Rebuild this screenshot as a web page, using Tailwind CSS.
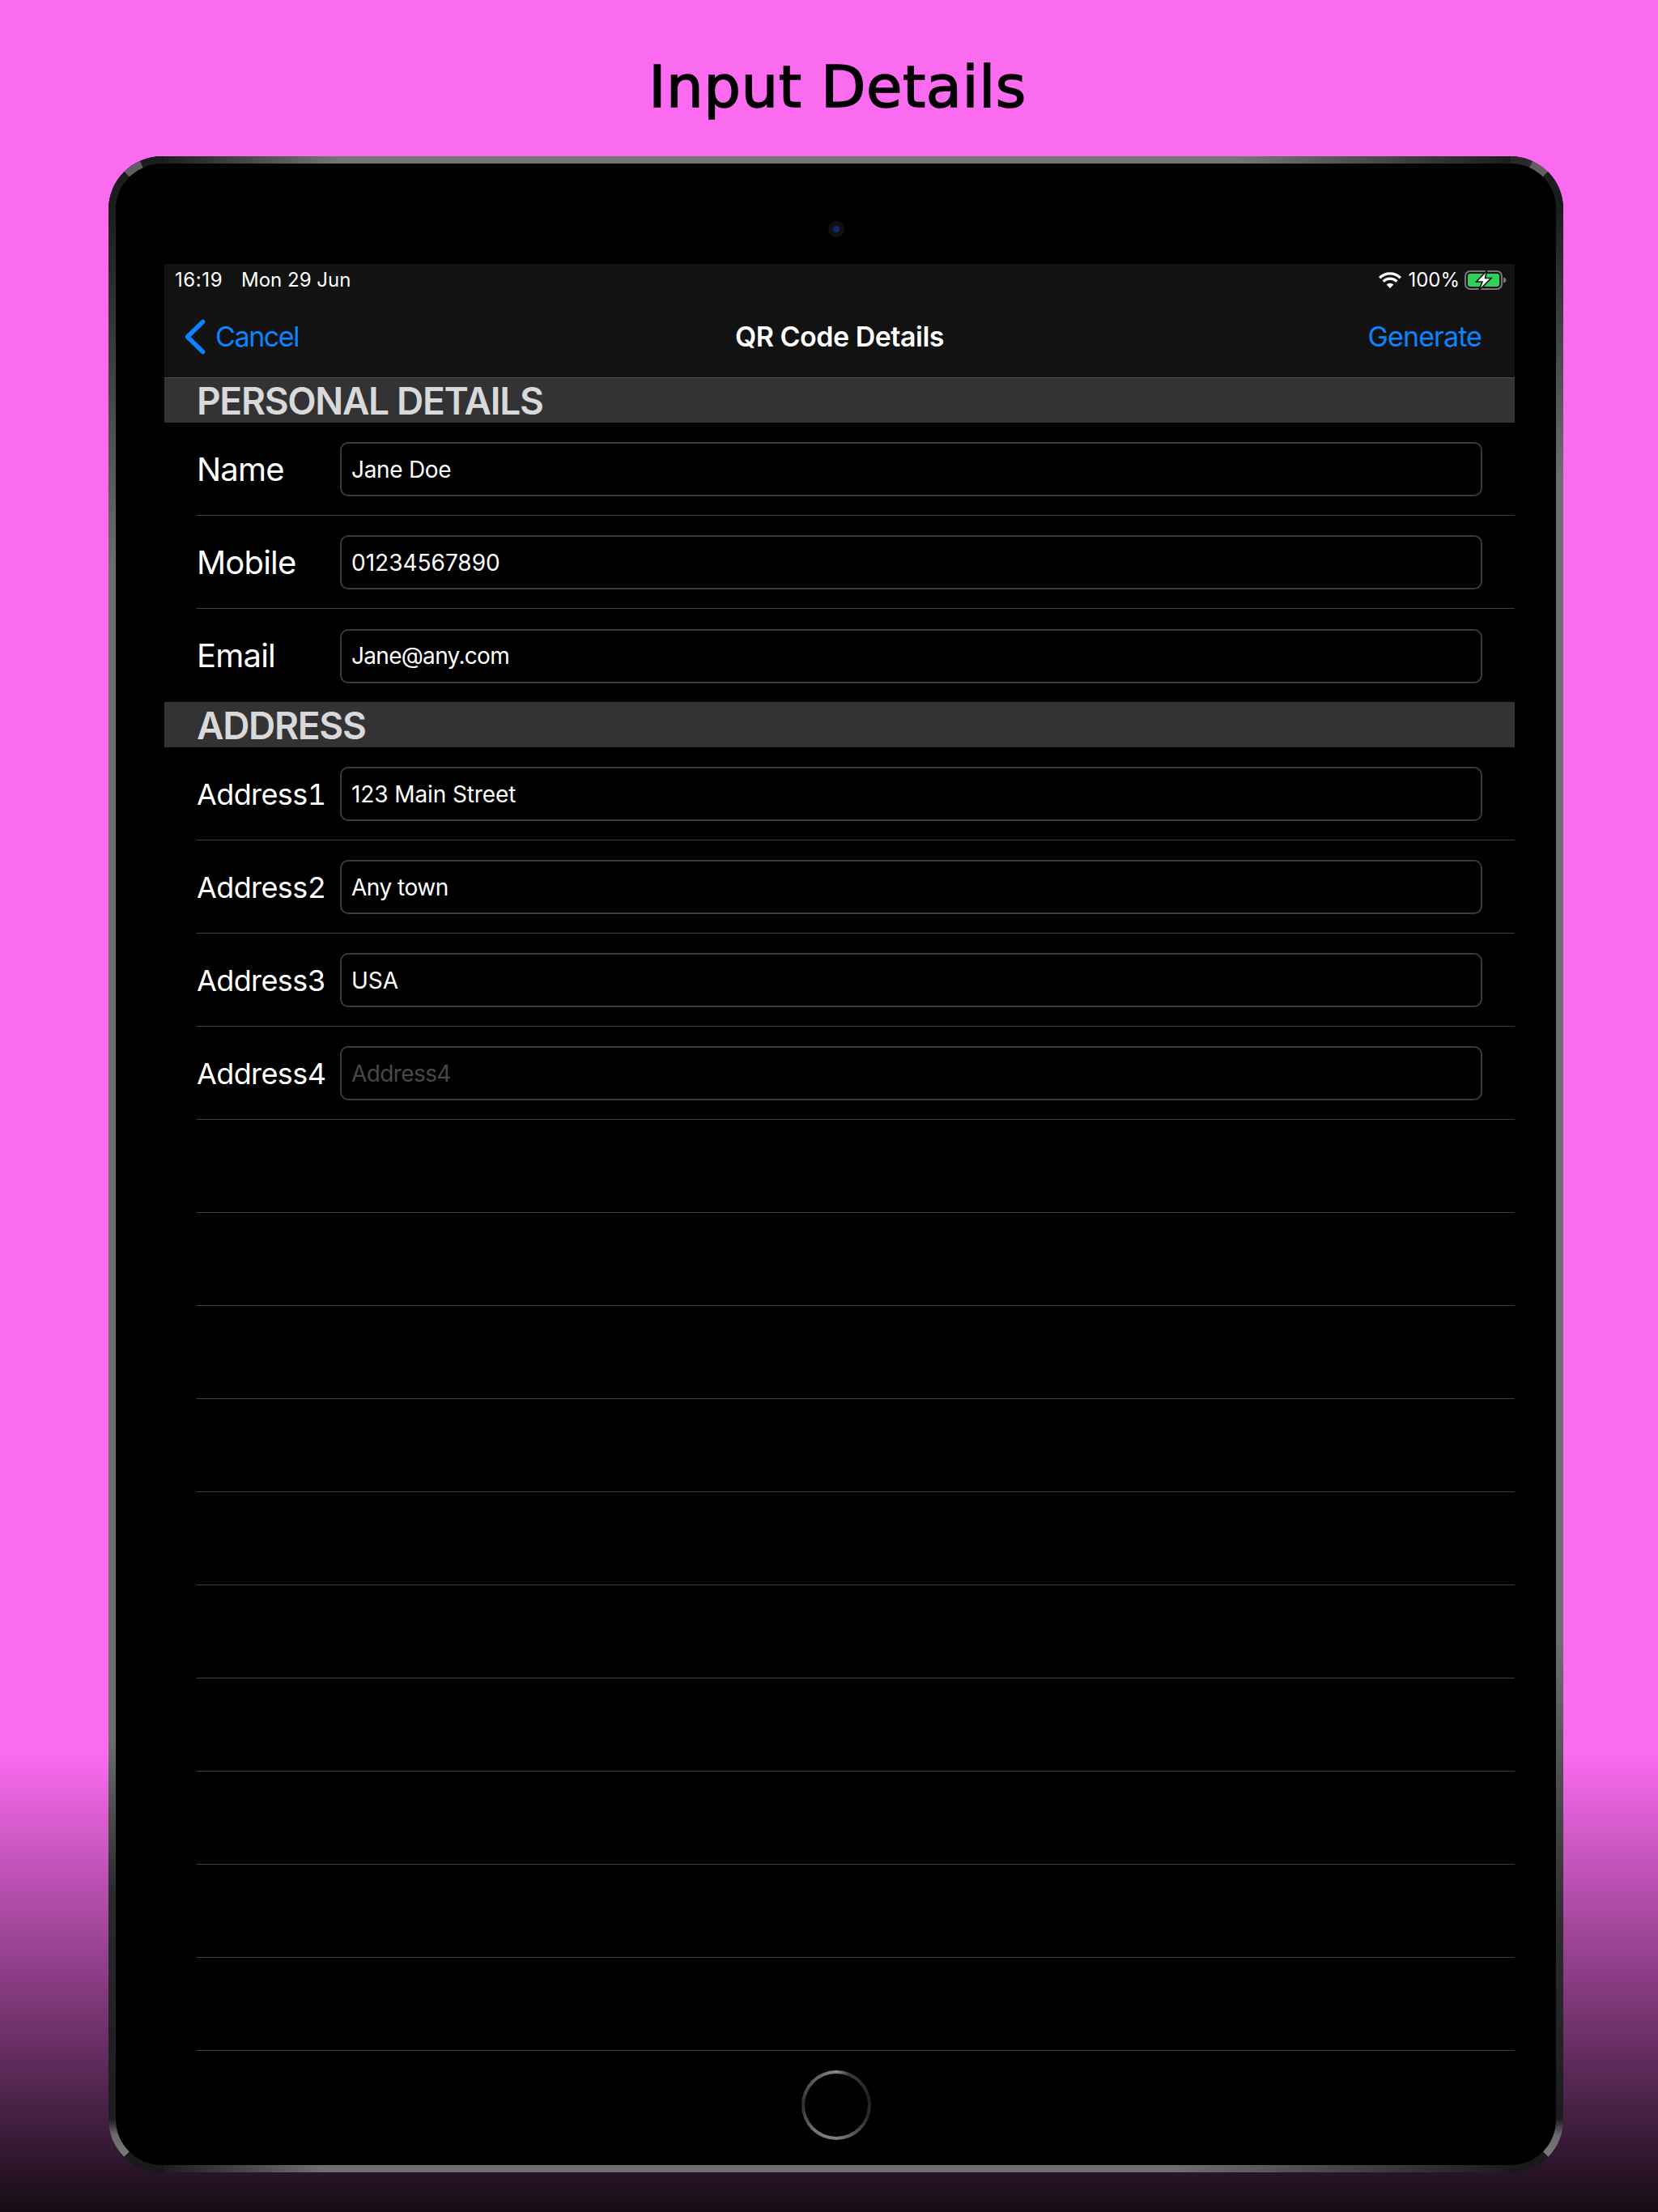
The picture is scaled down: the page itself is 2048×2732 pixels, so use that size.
<!DOCTYPE html>
<html>
<head>
<meta charset="utf-8">
<script src="https://cdn.jsdelivr.net/npm/@tailwindcss/browser@4"></script>
<title>Input Details</title>
</head>
<body class="m-0">
<div class="w-[2048px] h-[2732px] overflow-hidden flex flex-col font-[Inter,sans-serif] bg-[linear-gradient(180deg,#fb6bf0_0,#fb6bf0_2163px,#150c14_2732px)]">
  <div class="h-[193px] shrink-0 flex items-center justify-center pl-[21px] pt-[21px]">
    <h1 class="text-[72px] leading-none font-normal text-black tracking-[0.6px] [-webkit-text-stroke:1.6px_black] font-['DejaVu_Sans',sans-serif]">Input Details</h1>
  </div>
  <div class="relative ml-[134px] w-[1797px] h-[2490px] rounded-[66px] bg-black flex flex-col items-center">
    <!-- bezel -->
    <svg class="absolute inset-0" width="1797" height="2490" viewBox="134 193 1797 2490" fill="none" stroke-width="9">
      <defs>
        <linearGradient id="gt" gradientUnits="userSpaceOnUse" x1="200" y1="0" x2="1865" y2="0">
          <stop offset="0" stop-color="#1c1c1e"/><stop offset="0.13" stop-color="#757577"/><stop offset="0.8" stop-color="#757577"/><stop offset="1" stop-color="#1c1c1e"/>
        </linearGradient>
        <linearGradient id="gb" gradientUnits="userSpaceOnUse" x1="200" y1="0" x2="1865" y2="0">
          <stop offset="0" stop-color="#1c1c1e"/><stop offset="0.12" stop-color="#6f6f71"/><stop offset="0.75" stop-color="#6f6f71"/><stop offset="1" stop-color="#1c1c1e"/>
        </linearGradient>
        <linearGradient id="gl" gradientUnits="userSpaceOnUse" x1="0" y1="259" x2="0" y2="2617">
          <stop offset="0" stop-color="#1c1c1e"/><stop offset="0.19" stop-color="#6e6e70"/><stop offset="0.8" stop-color="#6e6e70"/><stop offset="0.88" stop-color="#2a2a2c"/><stop offset="1" stop-color="#1c1c1e"/>
        </linearGradient>
        <linearGradient id="gr" gradientUnits="userSpaceOnUse" x1="0" y1="259" x2="0" y2="2617">
          <stop offset="0" stop-color="#1c1c1e"/><stop offset="0.14" stop-color="#6e6e70"/><stop offset="0.75" stop-color="#6e6e70"/><stop offset="0.9" stop-color="#2c2c2e"/><stop offset="1" stop-color="#1c1c1e"/>
        </linearGradient>
        <linearGradient id="cbl" gradientUnits="userSpaceOnUse" x1="0" y1="2617" x2="0" y2="2660">
          <stop offset="0" stop-color="#1c1c1e"/><stop offset="0.45" stop-color="#6a6a6c"/><stop offset="1" stop-color="#77777a"/>
        </linearGradient>
      </defs>
      <path d="M200.5 197.5H1865.5" stroke="url(#gt)"/>
      <path d="M200.5 2678.5H1865.5" stroke="url(#gb)"/>
      <path d="M138.5 259V2617" stroke="url(#gl)"/>
      <path d="M1926.5 259V2617" stroke="url(#gr)"/>
      <path d="M138.5 259A62 62 0 0 1 156.7 215.2" stroke="#1c1c1e"/>
      <path d="M156.7 215.2A62 62 0 0 1 175 203" stroke="#5f5f61"/>
      <path d="M175 203A62 62 0 0 1 200.5 197.5" stroke="#1c1c1e"/>
      <path d="M1865.5 197.5A62 62 0 0 1 1891 203" stroke="#2a2a2c"/>
      <path d="M1891 203A62 62 0 0 1 1909 215.2" stroke="#5f5f61"/>
      <path d="M1909 215.2A62 62 0 0 1 1926.5 259" stroke="#1c1c1e"/>
      <path d="M138.5 2617A62 62 0 0 0 156.7 2660.8" stroke="url(#cbl)"/>
      <path d="M156.7 2660.8A62 62 0 0 0 200.5 2678.5" stroke="#1a1a1c"/>
      <path d="M1926.5 2617A62 62 0 0 1 1909 2660.8" stroke="url(#cbl)"/>
      <path d="M1909 2660.8A62 62 0 0 1 1865.5 2678.5" stroke="#1a1a1c"/>
    </svg>
    <!-- camera -->
    <div class="relative mt-[80px] size-[20px] rounded-full bg-[#111114] flex items-center justify-center shrink-0">
      <div class="size-[8px] rounded-full bg-[#0f2a6e]"></div>
    </div>
    <!-- screen -->
    <div class="relative mt-[33px] self-start ml-[69px] w-[1668px] text-white">
      <div class="bg-[#121212] border-b border-[#4d4d4f] h-[141px] flex flex-col">
        <div class="h-[40px] flex items-center justify-between pl-[13px] pr-[10px] text-[24px] leading-none">
          <div class="flex"><span class="w-[82px] tracking-[0.6px]">16:19</span><span>Mon 29 Jun</span></div>
          <div class="flex items-center">
            <svg width="28" height="20" viewBox="0 0 28 20" fill="none" stroke="#fff" stroke-width="3.4" class="mr-[8px]">
              <path d="M1.2 7.2A18 18 0 0 1 26.8 7.2"/>
              <path d="M5.6 11.6A12 12 0 0 1 22.4 11.6"/>
              <path d="M14 20L9.6 15.6A6.2 6.2 0 0 1 18.4 15.6Z" fill="#fff" stroke="none"/>
            </svg>
            <span>100%</span>
            <svg width="52" height="24" viewBox="0 0 52 24" fill="none" class="ml-[6px]">
              <rect x="1" y="1" width="45" height="22" rx="6" stroke="#77777a" stroke-width="2"/>
              <rect x="4" y="4" width="39" height="16" rx="3" fill="#30d158"/>
              <path d="M48 8.5C50 9 51.5 10.3 51.5 12C51.5 13.700 50 15 48 15.500Z" fill="#77777a"/>
              <path d="M27.500 0.500L14.500 14H22L18 24.500L33 9.500H25.500Z" fill="#fff" stroke="#121212" stroke-width="1.600"/>
            </svg>
          </div>
        </div>
        <div class="flex-1 grid grid-cols-3 items-center pl-[25px] pr-[41px] text-[34px] leading-none">
          <div class="flex items-center text-[#0a84ff]">
            <svg width="26" height="44" viewBox="0 0 26 44" fill="none" stroke="#0a84ff" stroke-width="5.500" stroke-linecap="round" stroke-linejoin="round">
              <path d="M22.500 3.500L3.500 22L22.500 40.500"/>
            </svg>
            <span class="ml-[12px] tracking-[-1.4px]">Cancel</span>
          </div>
          <div class="text-center font-semibold pl-[16px] tracking-[-0.5px]">QR Code Details</div>
          <div class="text-right text-[#0a84ff] tracking-[-0.9px]">Generate</div>
        </div>
      </div>

      <div class="h-[55px] bg-[#333335] pl-[40px] flex items-center text-[46px] leading-none font-semibold text-[#d9d9d9] tracking-[-1.3px]">PERSONAL DETAILS</div>
      <div class="ml-[40px] pr-[40px] pt-[1px] h-[115px] border-b border-[#3e3e40] flex items-center">
        <div class="w-[177px] text-[40px] leading-none tracking-[-0.8px]">Name</div>
        <div class="flex-1 h-[67px] border-[2px] border-[#3a3a3c] rounded-[10px] flex items-center pl-[12px] text-[28px] tracking-[-0.3px]">Jane Doe</div>
      </div>
      <div class="ml-[40px] pr-[40px] pt-[1px] h-[115px] border-b border-[#3e3e40] flex items-center">
        <div class="w-[177px] text-[40px] leading-none tracking-[-0.8px]">Mobile</div>
        <div class="flex-1 h-[67px] border-[2px] border-[#3a3a3c] rounded-[10px] flex items-center pl-[12px] text-[28px]">01234567890</div>
      </div>
      <div class="ml-[40px] pr-[40px] pt-[1px] h-[115px] flex items-center">
        <div class="w-[177px] text-[40px] leading-none tracking-[-0.8px]">Email</div>
        <div class="flex-1 h-[67px] border-[2px] border-[#3a3a3c] rounded-[10px] flex items-center pl-[12px] text-[28px] tracking-[-0.7px]">Jane@any.com</div>
      </div>

      <div class="h-[56px] pt-[2px] bg-[#333335] pl-[40px] flex items-center text-[46px] leading-none font-semibold text-[#d9d9d9] tracking-[-1.3px]">ADDRESS</div>
      <div class="ml-[40px] pr-[40px] pt-[1px] h-[115px] border-b border-[#3e3e40] flex items-center">
        <div class="w-[177px] text-[36px] leading-none tracking-[-0.6px] tabular-nums">Address1</div>
        <div class="flex-1 h-[67px] border-[2px] border-[#3a3a3c] rounded-[10px] flex items-center pl-[12px] text-[28px] tracking-[-0.1px]">123 Main Street</div>
      </div>
      <div class="ml-[40px] pr-[40px] pt-[1px] h-[115px] border-b border-[#3e3e40] flex items-center">
        <div class="w-[177px] text-[36px] leading-none tracking-[-0.6px] tabular-nums">Address2</div>
        <div class="flex-1 h-[67px] border-[2px] border-[#3a3a3c] rounded-[10px] flex items-center pl-[12px] text-[28px] tracking-[-0.5px]">Any town</div>
      </div>
      <div class="ml-[40px] pr-[40px] pt-[1px] h-[115px] border-b border-[#3e3e40] flex items-center">
        <div class="w-[177px] text-[36px] leading-none tracking-[-0.6px] tabular-nums">Address3</div>
        <div class="flex-1 h-[67px] border-[2px] border-[#3a3a3c] rounded-[10px] flex items-center pl-[12px] text-[28px]">USA</div>
      </div>
      <div class="ml-[40px] pr-[40px] pt-[1px] h-[115px] border-b border-[#3e3e40] flex items-center">
        <div class="w-[177px] text-[36px] leading-none tracking-[-0.6px] tabular-nums">Address4</div>
        <div class="flex-1 h-[67px] border-[2px] border-[#3a3a3c] rounded-[10px] flex items-center pl-[12px] text-[28px] text-[#48484a] tracking-[-0.6px]">Address4</div>
      </div>

      <div class="ml-[40px] h-[115px] border-b border-[#3e3e40]"></div>
      <div class="ml-[40px] h-[115px] border-b border-[#3e3e40]"></div>
      <div class="ml-[40px] h-[115px] border-b border-[#3e3e40]"></div>
      <div class="ml-[40px] h-[115px] border-b border-[#3e3e40]"></div>
      <div class="ml-[40px] h-[115px] border-b border-[#3e3e40]"></div>
      <div class="ml-[40px] h-[115px] border-b border-[#3e3e40]"></div>
      <div class="ml-[40px] h-[115px] border-b border-[#3e3e40]"></div>
      <div class="ml-[40px] h-[115px] border-b border-[#3e3e40]"></div>
      <div class="ml-[40px] h-[115px] border-b border-[#3e3e40]"></div>
      <div class="ml-[40px] h-[115px] border-b border-[#3e3e40]"></div>
    </div>
    <!-- home button -->
    <div class="relative mt-[24px] size-[86px] shrink-0 rounded-full flex items-center justify-center bg-[conic-gradient(#8a8a8c_0deg,#3a3a3c_22deg,#222224_70deg,#2a2a2c_110deg,#505052_145deg,#808082_180deg,#747476_220deg,#2c2c2e_270deg,#565658_310deg,#707072_340deg,#8a8a8c_360deg)]">
      <div class="size-[78px] rounded-full bg-black"></div>
    </div>
  </div>
</div>
</body>
</html>
